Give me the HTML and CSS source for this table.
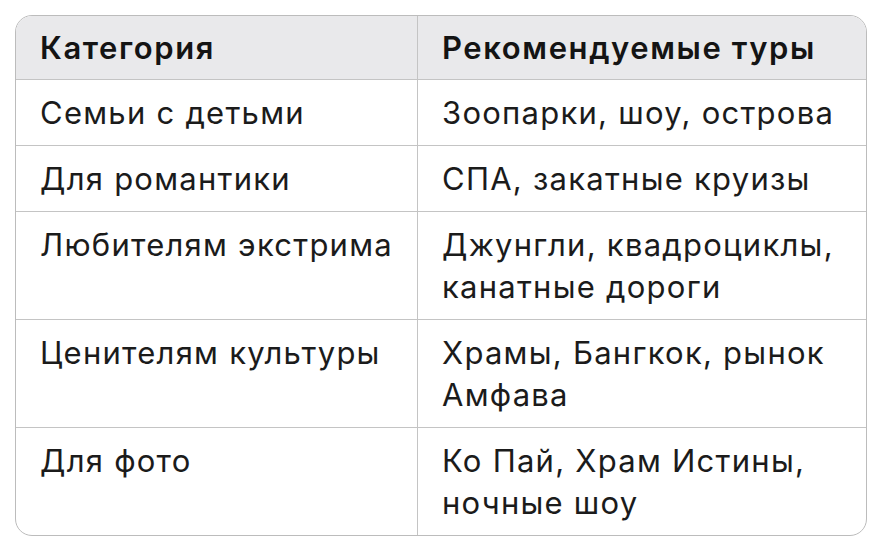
FILE: index.html
```html
<!DOCTYPE html>
<html lang="ru">
<head>
<meta charset="utf-8">
<link rel="stylesheet" href="styles.css">
</head>
<body>
<div class="wrap">
<table class="tours">
  <thead>
    <tr><th class="c1">Категория</th><th class="c2">Рекомендуемые туры</th></tr>
  </thead>
  <tbody>
    <tr><td class="c1">Семьи с детьми</td><td class="c2">Зоопарки, шоу, острова</td></tr>
    <tr><td class="c1">Для романтики</td><td class="c2">СПА, закатные круизы</td></tr>
    <tr><td class="c1">Любителям экстрима</td><td class="c2">Джунгли, квадроциклы, канатные дороги</td></tr>
    <tr><td class="c1">Ценителям культуры</td><td class="c2">Храмы, Бангкок, рынок Амфава</td></tr>
    <tr><td class="c1">Для фото</td><td class="c2">Ко Пай, Храм Истины, ночные шоу</td></tr>
  </tbody>
</table>
</div>
</body>
</html>
```
FILE: styles.css
```css
html, body {
  margin: 0;
  padding: 0;
  background: #ffffff;
}
.wrap {
  padding: 15px 16px 0 15px;
}
.tours {
  width: 852px;
  border-collapse: separate;
  border-spacing: 0;
  border: 1px solid #bcbcbc;
  border-radius: 17px;
  overflow: hidden;
  font-family: Inter, "Noto Sans", sans-serif;
  font-size: 31px;
  letter-spacing: 1.25px;
  line-height: 42px;
  color: #1b1b1b;
  table-layout: fixed;
}
.tours th, .tours td {
  text-align: left;
  vertical-align: top;
  padding: 12px 20px 11px 24px;
  border-bottom: 1px solid #c4c4c4;
}
.tours tbody tr:last-child td {
  border-bottom: none;
}
.tours .c1 {
  width: 357px;
  border-right: 1px solid #c4c4c4;
}
.tours th {
  background: #e9e9eb;
  color: #141414;
  font-weight: 600;
  letter-spacing: 1.6px;
  padding-top: 11px;
  padding-bottom: 10px;
}
```
